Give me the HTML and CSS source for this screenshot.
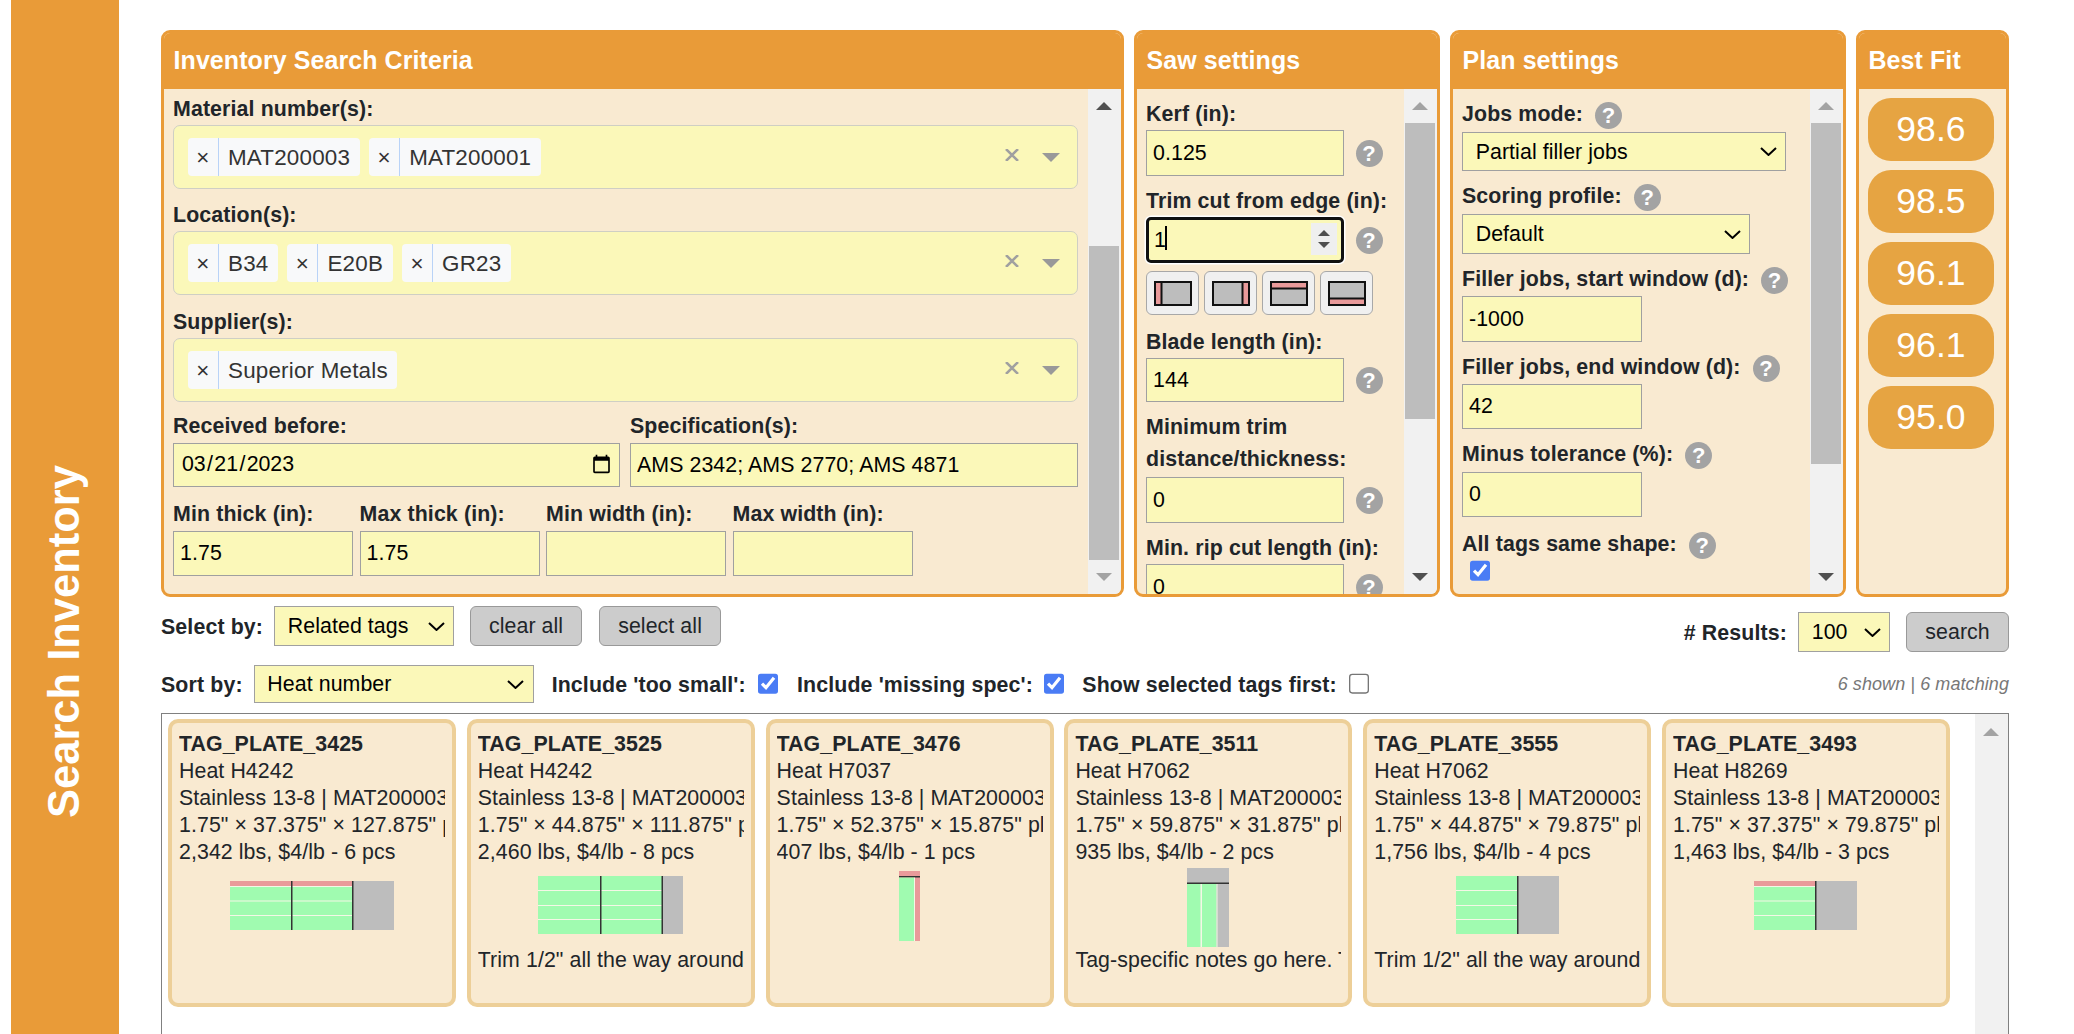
FILE: index.html
```html
<!DOCTYPE html>
<html lang="en">
<head>
<meta charset="utf-8">
<title>Search Inventory</title>
<link rel="stylesheet" href="styles.css">
</head>
<body>
<aside class="side"><span class="side-text">Search Inventory</span></aside>
<main class="main">
  <section class="panels">
    <div class="panel p-criteria">
      <h3 class="panel-head">Inventory Search Criteria</h3>
      <div class="panel-body">
        <div class="content criteria">
          <label class="lbl">Material number(s):</label>
          <div class="multi">
            <span class="chip"><span class="chip-x">×</span><span class="chip-t">MAT200003</span></span>
            <span class="chip"><span class="chip-x">×</span><span class="chip-t">MAT200001</span></span>
            <span class="multi-tools"><svg class="ico-x" viewBox="0 0 14 12"><path d="M1 0 13 12M13 0 1 12"/></svg><svg class="ico-caret" viewBox="0 0 18 9"><path d="M0 0H18L9 9Z"/></svg></span>
          </div>
          <label class="lbl">Location(s):</label>
          <div class="multi multi-b">
            <span class="chip"><span class="chip-x">×</span><span class="chip-t">B34</span></span>
            <span class="chip"><span class="chip-x">×</span><span class="chip-t">E20B</span></span>
            <span class="chip"><span class="chip-x">×</span><span class="chip-t">GR23</span></span>
            <span class="multi-tools"><svg class="ico-x" viewBox="0 0 14 12"><path d="M1 0 13 12M13 0 1 12"/></svg><svg class="ico-caret" viewBox="0 0 18 9"><path d="M0 0H18L9 9Z"/></svg></span>
          </div>
          <label class="lbl">Supplier(s):</label>
          <div class="multi">
            <span class="chip"><span class="chip-x">×</span><span class="chip-t">Superior Metals</span></span>
            <span class="multi-tools"><svg class="ico-x" viewBox="0 0 14 12"><path d="M1 0 13 12M13 0 1 12"/></svg><svg class="ico-caret" viewBox="0 0 18 9"><path d="M0 0H18L9 9Z"/></svg></span>
          </div>
          <div class="two-col">
            <div>
              <label class="lbl">Received before:</label>
              <input class="date" type="date" value="2023-03-21">
            </div>
            <div>
              <label class="lbl">Specification(s):</label>
              <input class="in in-spec" type="text" value="AMS 2342; AMS 2770; AMS 4871">
            </div>
          </div>
          <div class="four-col">
            <div><label class="lbl">Min thick (in):</label><input class="in in-dim" type="text" value="1.75"></div>
            <div><label class="lbl">Max thick (in):</label><input class="in in-dim" type="text" value="1.75"></div>
            <div><label class="lbl">Min width (in):</label><input class="in in-dim" type="text"></div>
            <div><label class="lbl">Max width (in):</label><input class="in in-dim" type="text"></div>
          </div>
        </div>
        <div class="sbar">
          <div class="sbtn"><span class="tri-up"></span></div>
          <div class="strack"><div class="thumb thumb-criteria"></div></div>
          <div class="sbtn"><span class="tri-down off"></span></div>
        </div>
      </div>
    </div>

    <div class="panel p-saw">
      <h3 class="panel-head">Saw settings</h3>
      <div class="panel-body">
        <div class="content saw">
          <label class="lbl">Kerf (in):</label>
          <div class="in-row"><input class="in in-saw" type="text" value="0.125"><span class="help">?</span></div>
          <label class="lbl gap-trim">Trim cut from edge (in):</label>
          <div class="in-row">
            <div class="trim-wrap">
              <input class="trim-in" type="number" value="1">
              <span class="caret"></span>
              <span class="spin"><span class="spin-up"></span><span class="spin-down"></span></span>
            </div>
            <span class="help">?</span>
          </div>
          <div class="trim-btns">
            <button class="tbtn" type="button"><svg class="tico" viewBox="0 0 38 25"><rect class="s" x="1" y="1" width="36" height="23"/><rect class="r" x="1" y="1" width="6" height="23"/><path class="k" d="M1 1H37V24H1ZM7.500 1V24"/></svg></button>
            <button class="tbtn" type="button"><svg class="tico" viewBox="0 0 38 25"><rect class="s" x="1" y="1" width="36" height="23"/><rect class="r" x="31" y="1" width="6" height="23"/><path class="k" d="M1 1H37V24H1ZM30.500 1V24"/></svg></button>
            <button class="tbtn" type="button"><svg class="tico" viewBox="0 0 38 25"><rect class="s" x="1" y="1" width="36" height="23"/><rect class="r" x="1" y="1" width="36" height="6"/><path class="k" d="M1 1H37V24H1ZM1 7.500H37"/></svg></button>
            <button class="tbtn" type="button"><svg class="tico" viewBox="0 0 38 25"><rect class="s" x="1" y="1" width="36" height="23"/><rect class="r" x="1" y="18" width="36" height="6"/><path class="k" d="M1 1H37V24H1ZM1 17.500H37"/></svg></button>
          </div>
          <label class="lbl gap-blade">Blade length (in):</label>
          <div class="in-row"><input class="in in-saw in-h44" type="text" value="144"><span class="help">?</span></div>
          <label class="lbl lbl-2line">Minimum trim distance/thickness:</label>
          <div class="in-row in-row-tight"><input class="in in-saw" type="text" value="0"><span class="help">?</span></div>
          <label class="lbl gap-rip">Min. rip cut length (in):</label>
          <div class="in-row"><input class="in in-saw" type="text" value="0"><span class="help">?</span></div>
        </div>
        <div class="sbar">
          <div class="sbtn"><span class="tri-up off"></span></div>
          <div class="strack"><div class="thumb thumb-saw"></div></div>
          <div class="sbtn"><span class="tri-down"></span></div>
        </div>
      </div>
    </div>

    <div class="panel p-plan">
      <h3 class="panel-head">Plan settings</h3>
      <div class="panel-body">
        <div class="content plan">
          <div class="lbl-row"><label class="lbl">Jobs mode:</label><span class="help">?</span></div>
          <div class="sel-wrap sw-jobs"><select class="sel"><option>Partial filler jobs</option></select><svg class="chev" viewBox="0 0 17 9"><path d="M1 1 8.500 8 16 1"/></svg></div>
          <div class="lbl-row gap-12"><label class="lbl">Scoring profile:</label><span class="help">?</span></div>
          <div class="sel-wrap sw-score"><select class="sel"><option>Default</option></select><svg class="chev" viewBox="0 0 17 9"><path d="M1 1 8.500 8 16 1"/></svg></div>
          <div class="lbl-row gap-12"><label class="lbl">Filler jobs, start window (d):</label><span class="help">?</span></div>
          <input class="in in-plan" type="text" value="-1000">
          <div class="lbl-row gap-12"><label class="lbl">Filler jobs, end window (d):</label><span class="help">?</span></div>
          <input class="in in-plan in-h45 in-m6" type="text" value="42">
          <div class="lbl-row gap-12"><label class="lbl">Minus tolerance (%):</label><span class="help">?</span></div>
          <input class="in in-plan in-h45 in-m7" type="text" value="0">
          <div class="lbl-row gap-14"><label class="lbl">All tags same shape:</label><span class="help">?</span></div>
          <input class="chk chk-plan" type="checkbox" checked>
        </div>
        <div class="sbar">
          <div class="sbtn"><span class="tri-up off"></span></div>
          <div class="strack"><div class="thumb thumb-plan"></div></div>
          <div class="sbtn"><span class="tri-down"></span></div>
        </div>
      </div>
    </div>

    <div class="panel p-best">
      <h3 class="panel-head">Best Fit</h3>
      <div class="best-body">
        <div class="badge">98.6</div>
        <div class="badge">98.5</div>
        <div class="badge">96.1</div>
        <div class="badge">96.1</div>
        <div class="badge">95.0</div>
      </div>
    </div>
  </section>

  <section class="row-select">
    <div class="group">
      <label class="lbl lbl-sel">Select by:</label>
      <div class="sel-wrap sw-by"><select class="sel"><option>Related tags</option></select><svg class="chev" viewBox="0 0 17 9"><path d="M1 1 8.500 8 16 1"/></svg></div>
      <button class="btn btn-clear" type="button">clear all</button>
      <button class="btn btn-all" type="button">select all</button>
    </div>
    <div class="group group-results">
      <label class="lbl">&#35; Results:</label>
      <div class="sel-wrap sw-res"><select class="sel"><option>100</option></select><svg class="chev" viewBox="0 0 17 9"><path d="M1 1 8.500 8 16 1"/></svg></div>
      <button class="btn btn-search" type="button">search</button>
    </div>
  </section>

  <section class="row-sort">
    <label class="lbl lbl-sort">Sort by:</label>
    <div class="sel-wrap sw-sort"><select class="sel"><option>Heat number</option></select><svg class="chev" viewBox="0 0 17 9"><path d="M1 1 8.500 8 16 1"/></svg></div>
    <label class="lbl opt opt-1">Include 'too small':</label><input class="chk" type="checkbox" checked>
    <label class="lbl opt opt-2">Include 'missing spec':</label><input class="chk" type="checkbox" checked>
    <label class="lbl opt opt-3">Show selected tags first:</label><input class="chk" type="checkbox">
    <span class="count">6 shown | 6 matching</span>
  </section>

  <section class="results">
    <div class="cards">
      <article class="card">
        <div class="ln ttl">TAG_PLATE_3425</div>
        <div class="ln">Heat H4242</div>
        <div class="ln">Stainless 13-8 | MAT200003 | plate stock</div>
        <div class="ln">1.75" × 37.375" × 127.875" plate</div>
        <div class="ln">2,342 lbs, $4/lb - 6 pcs</div>
        <div class="dia">
          <svg class="d1" viewBox="0 0 164 49"><rect class="s" width="164" height="49"/><rect class="g" width="123" height="49"/><rect class="r" width="123" height="5"/><rect class="w" y="5" width="123" height="1"/><rect class="w" y="19.500" width="123" height="1"/><rect class="w" y="34" width="123" height="1"/><rect class="k2" x="61" width="1.500" height="49"/><rect class="k2" x="122" width="1.500" height="49"/></svg>
        </div>
      </article>
      <article class="card">
        <div class="ln ttl">TAG_PLATE_3525</div>
        <div class="ln">Heat H4242</div>
        <div class="ln">Stainless 13-8 | MAT200003 | plate stock</div>
        <div class="ln">1.75" × 44.875" × 111.875" plate</div>
        <div class="ln">2,460 lbs, $4/lb - 8 pcs</div>
        <div class="dia">
          <svg class="d2" viewBox="0 0 145 58"><rect class="s" width="145" height="58"/><rect class="g" width="124" height="58"/><rect class="w" y="14" width="124" height="1"/><rect class="w" y="29" width="124" height="1"/><rect class="w" y="43" width="124" height="1"/><rect class="k2" x="62" width="1.500" height="58"/><rect class="k2" x="123.500" width="1.500" height="58"/></svg>
        </div>
        <div class="ln">Trim 1/2" all the way around the plate</div>
      </article>
      <article class="card">
        <div class="ln ttl">TAG_PLATE_3476</div>
        <div class="ln">Heat H7037</div>
        <div class="ln">Stainless 13-8 | MAT200003 | plate stock</div>
        <div class="ln">1.75" × 52.375" × 15.875" plate</div>
        <div class="ln">407 lbs, $4/lb - 1 pcs</div>
        <div class="dia">
          <svg class="d3" viewBox="0 0 21 70"><rect class="r" width="21" height="70"/><rect class="k2" y="5" width="21" height="1.500"/><rect class="g" y="6.500" width="15" height="63.500"/><rect class="w" x="15" y="6.500" width="1" height="63.500"/></svg>
        </div>
      </article>
      <article class="card">
        <div class="ln ttl">TAG_PLATE_3511</div>
        <div class="ln">Heat H7062</div>
        <div class="ln">Stainless 13-8 | MAT200003 | plate stock</div>
        <div class="ln">1.75" × 59.875" × 31.875" plate</div>
        <div class="ln">935 lbs, $4/lb - 2 pcs</div>
        <div class="dia">
          <svg class="d4" viewBox="0 0 42 79"><rect class="s" width="42" height="79"/><rect class="g" y="16" width="29.500" height="63"/><rect class="w" x="13.500" y="16" width="1.500" height="63"/><rect class="w" x="29.500" y="16" width="1" height="63"/><rect class="k2" y="14.500" width="42" height="1.500"/></svg>
        </div>
        <div class="ln">Tag-specific notes go here. Tag-specific notes</div>
      </article>
      <article class="card">
        <div class="ln ttl">TAG_PLATE_3555</div>
        <div class="ln">Heat H7062</div>
        <div class="ln">Stainless 13-8 | MAT200003 | plate stock</div>
        <div class="ln">1.75" × 44.875" × 79.875" plate</div>
        <div class="ln">1,756 lbs, $4/lb - 4 pcs</div>
        <div class="dia">
          <svg class="d5" viewBox="0 0 103 58"><rect class="s" width="103" height="58"/><rect class="g" width="61" height="58"/><rect class="w" y="14" width="61" height="1"/><rect class="w" y="29" width="61" height="1"/><rect class="w" y="43" width="61" height="1"/><rect class="k2" x="61" width="1.500" height="58"/></svg>
        </div>
        <div class="ln">Trim 1/2" all the way around the plate</div>
      </article>
      <article class="card">
        <div class="ln ttl">TAG_PLATE_3493</div>
        <div class="ln">Heat H8269</div>
        <div class="ln">Stainless 13-8 | MAT200003 | plate stock</div>
        <div class="ln">1.75" × 37.375" × 79.875" plate</div>
        <div class="ln">1,463 lbs, $4/lb - 3 pcs</div>
        <div class="dia">
          <svg class="d6" viewBox="0 0 103 49"><rect class="s" width="103" height="49"/><rect class="g" width="61" height="49"/><rect class="r" width="61" height="5"/><rect class="w" y="5" width="61" height="1"/><rect class="w" y="19.500" width="61" height="1"/><rect class="w" y="34" width="61" height="1"/><rect class="k2" x="61" width="1.500" height="49"/></svg>
        </div>
      </article>
    </div>
    <div class="sbar sbar-results">
      <div class="sbtn sbtn-results"><span class="tri-up off"></span></div>
    </div>
  </section>
</main>
</body>
</html>
```

FILE: styles.css
```css
* { box-sizing: border-box; }
html, body { margin: 0; padding: 0; height: 1034px; overflow: hidden; background: #fff; }
body {
  display: flex;
  align-items: flex-start;
  font-family: "Liberation Sans", Arial, sans-serif;
  font-size: 21.33px;
  letter-spacing: 0.08px;
  color: #212529;
}

/* sidebar */
.side {
  flex: none;
  width: 108px;
  height: 1282px;
  margin-left: 11px;
  background: #e99b38;
  display: flex;
  align-items: center;
  justify-content: center;
}
.side-text {
  writing-mode: vertical-rl;
  transform: rotate(180deg);
  color: #fff;
  font-weight: 700;
  font-size: 43.5px;
  letter-spacing: 0;
  line-height: 1;
}

/* main */
.main { flex: none; width: 1848px; margin-left: 42px; padding-top: 30px; }
.panels { display: flex; gap: 10px; height: 567px; }
.panel {
  display: flex;
  flex-direction: column;
  border: 3px solid #e99b38;
  border-radius: 9px;
  background: #f9ead1;
  overflow: hidden;
}
.p-criteria { width: 963px; }
.p-saw { width: 306px; }
.p-plan { width: 396px; }
.p-best { width: 153px; }
.panel-head {
  flex: none;
  margin: 0;
  height: 56px;
  padding-left: 9.500px;
  background: #e99b38;
  color: #fff;
  font-size: 24.96px;
  font-weight: 700;
  letter-spacing: 0.1px;
  line-height: 54px;
}
.panel-body { flex: 1; min-height: 0; display: flex; }
.content { flex: 1; min-width: 0; overflow: hidden; padding-left: 9px; }

.lbl { display: block; height: 24px; font-weight: 700; letter-spacing: 0.13px; line-height: 26px; white-space: nowrap; }

/* scrollbars */
.sbar { flex: none; width: 33.5px; display: flex; flex-direction: column; background: #f1f1f1; }
.sbtn { flex: none; height: 34px; display: flex; align-items: center; justify-content: center; }
.strack { flex: 1; min-height: 0; }
.thumb { margin: 0 2px 0 1.500px; background: #bdbdbd; }
.thumb-criteria { margin-top: 123px; height: 314px; }
.thumb-saw { height: 296px; }
.thumb-plan { height: 341px; }
.tri-up, .tri-down { width: 0; height: 0; border-left: 8.500px solid transparent; border-right: 8.500px solid transparent; }
.tri-up { border-bottom: 8.500px solid #505050; }
.tri-down { border-top: 8.500px solid #505050; }
.tri-up.off { border-bottom-color: #a3a3a3; }
.tri-down.off { border-top-color: #a3a3a3; }

/* criteria */
.criteria { padding-top: 7px; padding-right: 9.500px; }
.multi {
  position: relative;
  height: 64px;
  margin: 5px 0 13px;
  padding-left: 14px;
  display: flex;
  align-items: center;
  gap: 9.500px;
  background: #fbf8b9;
  border: 1.330px solid #cfcfc4;
  border-radius: 7px;
}
.multi-b { margin-bottom: 14px; }
.chip {
  display: flex;
  align-items: stretch;
  height: 38px;
  background: #f8f9fa;
  border-radius: 4px;
  color: #333;
  font-size: 22.4px;
  letter-spacing: 0.2px;
  line-height: 39px;
}
.chip-x { width: 31px; text-align: center; border-right: 1px solid #b9d3f7; }
.chip-t { padding: 0 9.500px 0 9px; }
.multi-tools {
  position: absolute;
  right: 17.500px;
  top: 0;
  bottom: 0;
  display: flex;
  align-items: center;
  gap: 23px;
}
.ico-x { width: 14px; height: 12px; margin-top: -4px; fill: none; stroke: #a0a0a0; stroke-width: 2.5; }
.ico-caret { width: 18px; height: 9px; fill: #999; }

.in {
  display: block;
  height: 46px;
  padding: 0 6px;
  border: 1.330px solid #a0a0a0;
  border-radius: 0;
  background: #fbf8b9;
  color: #000;
  font-family: inherit;
  font-size: 21.33px;
  letter-spacing: 0.08px;
  outline: none;
}
.in-h44 { height: 44px; }
.in-h45 { height: 45px; }
.two-col { display: grid; grid-template-columns: 447px 448px; gap: 10px; margin-top: -2px; }
.two-col .lbl { margin-bottom: 6px; }
.in-spec { width: 100%; height: 44px; }
.date {
  display: block;
  zoom: 1.3333;
  width: 335.25px;
  height: 33px;
  padding: 0 3px 0 5px;
  border: 1px solid #a0a0a0;
  border-radius: 0;
  background: #fbf8b9;
  color: #000;
  font-family: inherit;
  font-size: 16px;
}
.four-col { display: flex; gap: 6.500px; margin-top: 14px; }
.four-col .lbl { margin-bottom: 6px; }
.in-dim { width: 180px; height: 45px; }

/* saw */
.saw { padding-top: 12px; }
.in-row { display: flex; align-items: center; gap: 11.500px; margin-top: 5px; }
.in-row-tight { margin-top: 2px; }
.in-saw { width: 198px; }
.help {
  flex: none;
  width: 27px;
  height: 27px;
  border-radius: 50%;
  background: #a3a3a3;
  color: #fff;
  font-size: 22px;
  font-weight: 700;
  letter-spacing: 0;
  line-height: 27px;
  text-align: center;
}
.gap-trim { margin-top: 12px; }
.gap-blade { margin-top: 14px; }
.gap-rip { margin-top: 12px; }
.lbl-2line { height: auto; white-space: normal; line-height: 32px; width: 240px; margin-top: 9px; }
.trim-wrap { position: relative; flex: none; width: 198px; height: 46px; }
.trim-in {
  display: block;
  width: 100%;
  height: 100%;
  padding: 0 4px 0 5px;
  border: 3px solid #101010;
  border-radius: 5px;
  background: #fbf8b9;
  color: #000;
  font-family: inherit;
  font-size: 21.33px;
  outline: none;
  box-shadow: 0 0 0 1.500px #fff;
  appearance: textfield;
}
.caret { position: absolute; left: 19px; top: 9px; width: 2px; height: 24px; background: #000; }
.spin {
  position: absolute;
  left: 165px;
  top: 6px;
  width: 26px;
  height: 32px;
  display: flex;
  flex-direction: column;
  align-items: center;
  justify-content: center;
  gap: 6px;
  background: #efefef;
}
.spin-up, .spin-down { width: 0; height: 0; border-left: 6.500px solid transparent; border-right: 6.500px solid transparent; }
.spin-up { border-bottom: 6.500px solid #4f4f4f; }
.spin-down { border-top: 6.500px solid #4f4f4f; }
.trim-btns { display: flex; gap: 5px; margin-top: 8px; }
.tbtn {
  width: 53px;
  height: 44px;
  padding: 0;
  display: flex;
  align-items: center;
  justify-content: center;
  background: #f0f0f0;
  border: 1.330px solid #a8a8a8;
  border-radius: 6px;
}
.tico { width: 38px; height: 25px; }
.k { fill: none; stroke: #111; stroke-width: 2; }

/* svg palette */
.s { fill: #bdbdbd; }
.r { fill: #e99a9a; }
.g { fill: #a0fbb0; }
.w { fill: #f4f7e6; }
.k2 { fill: #333; }

/* plan */
.plan { padding-top: 12px; padding-left: 9px; }
.lbl-row { display: flex; align-items: center; gap: 12px; height: 24px; }
.lbl-row .help { margin-top: 4px; }
.gap-12 { margin-top: 12px; }
.gap-14 { margin-top: 14px; }
.sel-wrap { position: relative; flex: none; }
.sel {
  display: block;
  width: 100%;
  height: 100%;
  padding: 0 30px 0 12.700px;
  border: 1.330px solid #a0a0a0;
  border-radius: 0;
  background-color: #fbf8b9;
  color: #000;
  font-family: inherit;
  font-size: 21.33px;
  letter-spacing: 0.08px;
  appearance: none;
}
.chev {
  position: absolute;
  right: 9.500px;
  top: 50%;
  width: 17px;
  height: 9px;
  margin-top: -4.500px;
  fill: none;
  stroke: #000;
  stroke-width: 2;
}
.sw-jobs { width: 324px; height: 39px; margin-top: 7px; }
.sw-score { width: 288px; height: 40px; margin-top: 7px; }
.sw-by { width: 180px; height: 40px; }
.sw-res { width: 92px; height: 40px; margin-left: 11px; }
.sw-sort { width: 280px; height: 38px; }
.in-plan { width: 180px; margin-top: 6px; }
.in-m6 { margin-top: 6px; }
.in-m7 { margin-top: 7px; }
.chk { zoom: 1.3333; width: 16px; height: 16px; margin: 0; accent-color: #4a7cf5; flex: none; }
.chk-plan { display: block; margin: 4px 0 0 6px; }

/* best fit */
.best-body { flex: 1; display: flex; flex-direction: column; gap: 9px; padding: 9px 0 0 9px; }
.badge {
  width: 126px;
  height: 63px;
  border-radius: 23px;
  background: #e6a442;
  color: #fff;
  font-size: 35.5px;
  line-height: 63px;
  text-align: center;
}

/* toolbars */
.row-select { display: flex; justify-content: space-between; align-items: flex-start; margin-top: 9px; }
.group { display: flex; align-items: center; height: 40px; }
.group-results { margin-top: 6px; }
.lbl-sel { margin-right: 11px; }
.btn {
  height: 40px;
  padding: 0;
  background: #ccc;
  border: 1.330px solid #999;
  border-radius: 6px;
  color: #212529;
  font-family: inherit;
  font-size: 21.33px;
  letter-spacing: 0.08px;
}
.btn-clear { width: 112px; margin-left: 16px; }
.btn-all { width: 122px; margin-left: 17px; }
.btn-search { width: 103px; margin-left: 16px; }
.row-sort { position: relative; display: flex; align-items: center; height: 38px; margin-top: 13px; }
.lbl-sort { margin-right: 11px; }
.opt-1 { margin-left: 18px; margin-right: 12px; }
.opt-2 { margin-left: 18px; margin-right: 11px; }
.opt-3 { margin-left: 17px; margin-right: 12px; }
.count { margin-left: auto; color: #777; font-size: 18px; font-style: italic; }

/* results */
.results {
  display: flex;
  justify-content: space-between;
  height: 400px;
  margin-top: 10px;
  border: 1.330px solid #808080;
}
.cards { display: flex; gap: 10.800px; padding: 5px 0 0 6px; }
.card {
  flex: none;
  width: 288px;
  height: 288px;
  padding: 8px 7px 0;
  border: 4px solid #edcf98;
  border-radius: 10px;
  background: #f9ead1;
  overflow: hidden;
}
.ln { width: 266px; overflow: hidden; white-space: nowrap; line-height: 27px; }
.ttl { font-weight: 700; }
.dia { display: flex; align-items: center; justify-content: center; height: 80px; margin: -1px 0 1.500px; }
.d1 { width: 164px; height: 49px; }
.d2 { width: 145px; height: 58px; }
.d3 { width: 21px; height: 70px; margin-top: 2px; }
.d4 { width: 42px; height: 79px; margin-top: 5px; }
.d5 { width: 103px; height: 58px; }
.d6 { width: 103px; height: 49px; }
.sbar-results { height: 100%; }
.sbtn-results { height: 36px; }
```
